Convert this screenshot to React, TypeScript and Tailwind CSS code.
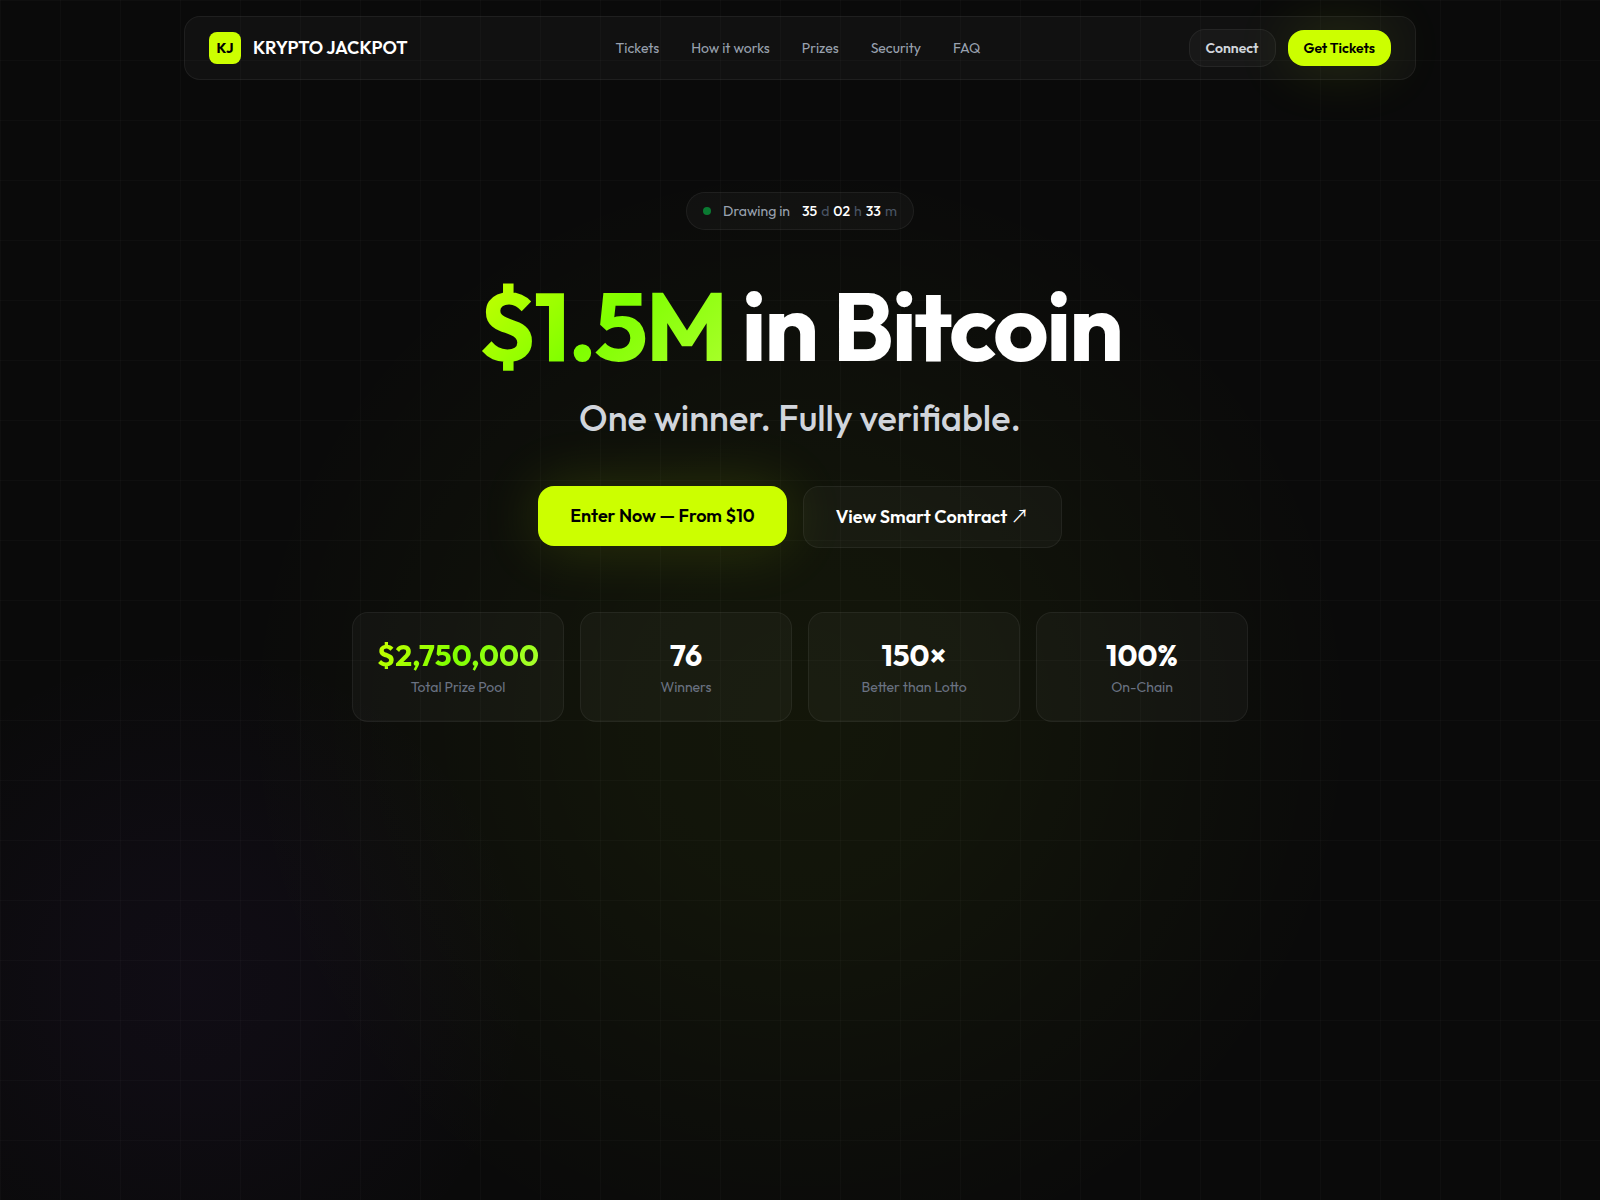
const navLinks = [
  { label: 'Tickets', href: '#tickets' },
  { label: 'How it works', href: '#how' },
  { label: 'Prizes', href: '#prizes' },
  { label: 'Security', href: '#security' },
  { label: 'FAQ', href: '#faq' }
];

const stats = [
  { value: '$2,750,000', label: 'Total Prize Pool', highlight: true },
  { value: '76', label: 'Winners' },
  { value: '150×', label: 'Better than Lotto' },
  { value: '100%', label: 'On-Chain' }
];

const countdown = [
  { value: '35', unit: 'd' },
  { value: '02', unit: 'h' },
  { value: '33', unit: 'm' }
];

const Navbar = () => (
  <header className="w-full max-w-[1280px] mx-auto px-6 pt-4">
    <nav className="flex items-center justify-between h-16 px-6 rounded-2xl border border-white/6 bg-white/3">
      <a href="#top" className="flex items-center gap-3">
        <span className="flex items-center justify-center size-8 rounded-lg bg-[#ccff00] text-black text-sm font-bold">
          KJ
        </span>
        <span className="text-lg font-semibold">KRYPTO JACKPOT</span>
      </a>

      <div className="flex items-center gap-8 text-sm text-gray-400">
        {navLinks.map((link) => (
          <a key={link.label} href={link.href}>
            {link.label}
          </a>
        ))}
      </div>

      <div className="flex items-center gap-3 text-sm font-semibold">
        <button className="px-4 py-2 rounded-2xl border border-white/6 bg-white/3 text-gray-300">
          Connect
        </button>
        <button className="px-4 py-2 rounded-2xl bg-[#ccff00] text-black shadow-[0_0_60px_rgba(204,255,0,0.15)]">
          Get Tickets
        </button>
      </div>
    </nav>
  </header>
);

const Countdown = () => (
  <div className="flex items-center gap-3 px-4 py-2 rounded-full border border-white/6 bg-white/3 text-sm">
    <span className="size-2 rounded-full bg-[#0a7a32]" />
    <span className="text-gray-400">Drawing in</span>
    <span className="flex gap-1 font-medium">
      {countdown.map(({ value, unit }) => (
        <span key={unit} className="flex gap-1">
          {value}
          <span className="font-normal text-gray-600">{unit}</span>
        </span>
      ))}
    </span>
  </div>
);

const Hero = () => (
  <main className="flex flex-col items-center px-6 pt-28 pb-16">
    <Countdown />

    <h1 className="mt-12 text-8xl leading-none font-bold tracking-tight text-center">
      <span className="bg-[linear-gradient(135deg,#ccff00_0%,#7fff00_50%,#adff2f_100%)] bg-clip-text text-transparent">
        $1.5M
      </span>{' '}
      in Bitcoin
    </h1>
    <p className="mt-6 text-4xl font-medium text-gray-300 text-center">One winner. Fully verifiable.</p>

    <div className="flex items-start gap-4 mt-12 text-lg font-semibold">
      <button className="px-8 py-4 rounded-2xl bg-[#ccff00] text-black shadow-[0_0_60px_rgba(204,255,0,0.15)]">
        Enter Now — From $10
      </button>
      <a href="#contract" className="px-8 py-4 rounded-2xl border border-white/6 bg-white/3">
        View Smart Contract{' '}
        <span className="leading-none font-normal font-['Noto_Sans_CJK_JP',sans-serif]">↗</span>
      </a>
    </div>

    <div className="grid grid-cols-4 gap-4 w-full max-w-4xl mt-16">
      {stats.map((stat) => (
        <div
          key={stat.label}
          className="flex flex-col items-center gap-1 p-6 rounded-2xl border border-white/6 bg-white/3"
        >
          <span
            className={
              stat.highlight
                ? 'text-3xl font-bold bg-[linear-gradient(135deg,#ccff00_0%,#7fff00_50%,#adff2f_100%)] bg-clip-text text-transparent'
                : 'text-3xl font-bold'
            }
          >
            {stat.value}
          </span>
          <span className="text-sm text-gray-500">{stat.label}</span>
        </div>
      ))}
    </div>
  </main>
);

export default function App() {
  return (
    <div className="min-h-screen bg-[#0a0a0a] bg-[radial-gradient(circle_at_50%_60%,rgba(190,255,0,0.05)_0,rgba(190,255,0,0.045)_180px,rgba(190,255,0,0.02)_380px,transparent_560px),radial-gradient(circle_at_12%_82%,rgba(128,60,220,0.05)_0,rgba(128,60,220,0.04)_120px,transparent_340px)] text-white font-[Outfit,sans-serif]">
      <div className="min-h-screen bg-[linear-gradient(rgba(255,255,255,0.02)_1px,transparent_1px),linear-gradient(90deg,rgba(255,255,255,0.02)_1px,transparent_1px)] bg-[size:60px_60px]">
        <Navbar />
        <Hero />
      </div>
    </div>
  );
}
